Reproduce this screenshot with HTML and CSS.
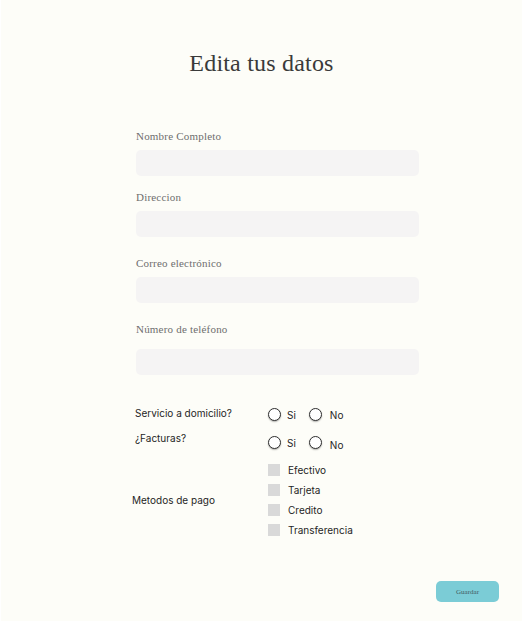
FILE: index.html
```html
<!DOCTYPE html>
<html lang="es">
<head>
<meta charset="utf-8">
<title>Edita tus datos</title>
<link rel="stylesheet" href="styles.css">
</head>
<body>
<div class="page">
  <h1 class="title">Edita tus datos</h1>
  <form class="form">
    <div class="field">
      <label class="flabel">Nombre Completo</label>
      <input class="input" type="text">
    </div>
    <div class="field field-2">
      <label class="flabel">Direccion</label>
      <input class="input" type="text">
    </div>
    <div class="field field-3">
      <label class="flabel">Correo electrónico</label>
      <input class="input" type="text">
    </div>
    <div class="field field-4">
      <label class="flabel flabel-wide">Número de teléfono</label>
      <input class="input" type="text">
    </div>
  </form>

  <div class="options">
    <div class="row radio-row">
      <span class="q">Servicio a domicilio?</span>
      <div class="radios">
        <span class="opt"><span class="radio"></span>Si</span>
        <span class="opt opt-no"><span class="radio"></span>No</span>
      </div>
    </div>
    <div class="row radio-row radio-row-2">
      <span class="q q-up">¿Facturas?</span>
      <div class="radios">
        <span class="opt"><span class="radio"></span>Si</span>
        <span class="opt opt-no"><span class="radio"></span><span class="low">No</span></span>
      </div>
    </div>
    <div class="row check-row">
      <span class="q q-pay">Metodos de pago</span>
      <div class="checks">
        <span class="chk"><span class="box"></span>Efectivo</span>
        <span class="chk"><span class="box"></span>Tarjeta</span>
        <span class="chk"><span class="box"></span>Credito</span>
        <span class="chk"><span class="box"></span>Transferencia</span>
      </div>
    </div>
  </div>

  <div class="actions">
    <button class="btn" type="button">Guardar</button>
  </div>
</div>
</body>
</html>
```

FILE: styles.css
```css
* { box-sizing: border-box; }

html, body {
  margin: 0;
  padding: 0;
  background: #ffffff;
}

.page {
  margin: 0 1px;
  height: 621px;
  background: #fdfdf8;
  padding-top: 49px;
  overflow: hidden;
}

.title {
  margin: 0;
  text-align: center;
  font-family: "Liberation Serif", "Times New Roman", serif;
  font-weight: normal;
  font-size: 24px;
  line-height: 28px;
  letter-spacing: 0.2px;
  color: #3a3a3a;
}

.form {
  margin: 53px 0 0 135px;
  width: 283px;
}

.field { display: flex; flex-direction: column; }
.field-2 { margin-top: 15px; }
.field-3 { margin-top: 20px; }
.field-4 { margin-top: 20px; }

.flabel {
  font-family: "Liberation Serif", "Times New Roman", serif;
  font-size: 11px;
  line-height: 13px;
  letter-spacing: 0.2px;
  color: #6e6e6e;
  margin-bottom: 7px;
}
.flabel-wide { margin-bottom: 13px; }

.input {
  display: block;
  width: 283px;
  height: 26px;
  border: none;
  border-radius: 5px;
  background: #f5f4f4;
  padding: 0 8px;
  outline: none;
}

.options {
  margin: 33px 0 0 130px;
  font-family: Inter, "Noto Sans", sans-serif;
  font-size: 10px;
  color: #1f1f1f;
}

.row {
  display: grid;
  grid-template-columns: 137px auto;
}

.radio-row { align-items: start; }
.radio-row-2 { margin-top: 15px; }

.q {
  padding-left: 4px;
  line-height: 10px;
}
.q-up { margin-top: -3px; }

.radios {
  display: flex;
  align-items: center;
  height: 13px;
  line-height: 12px;
}

.opt {
  display: flex;
  align-items: center;
  gap: 6px;
}
.opt-no {
  gap: 8px;
  margin-left: 13px;
}
.low { position: relative; top: 2px; }

.radio {
  width: 13px;
  height: 13px;
  border-radius: 50%;
  background: #ffffff;
  border: 1px solid #2f2f2f;
  box-shadow: 0 1px 1.5px rgba(0, 0, 0, 0.3);
  flex: none;
}

.check-row {
  margin-top: 15px;
  align-items: center;
}

.q-pay {
  padding-left: 1px;
  line-height: 12px;
}

.checks {
  display: flex;
  flex-direction: column;
  gap: 8px;
}

.chk {
  display: flex;
  align-items: center;
  gap: 8px;
  height: 12px;
  line-height: 12px;
}

.box {
  width: 12px;
  height: 12px;
  background: #d9d9d9;
  flex: none;
}

.actions {
  display: flex;
  justify-content: flex-end;
  padding-right: 23px;
  margin-top: 45px;
}

.btn {
  width: 63px;
  height: 21px;
  border: none;
  border-radius: 5px;
  background: #7bccd6;
  font-family: "Liberation Serif", "Times New Roman", serif;
  font-size: 7px;
  color: #3f5b62;
  padding: 0;
  cursor: pointer;
}
```
